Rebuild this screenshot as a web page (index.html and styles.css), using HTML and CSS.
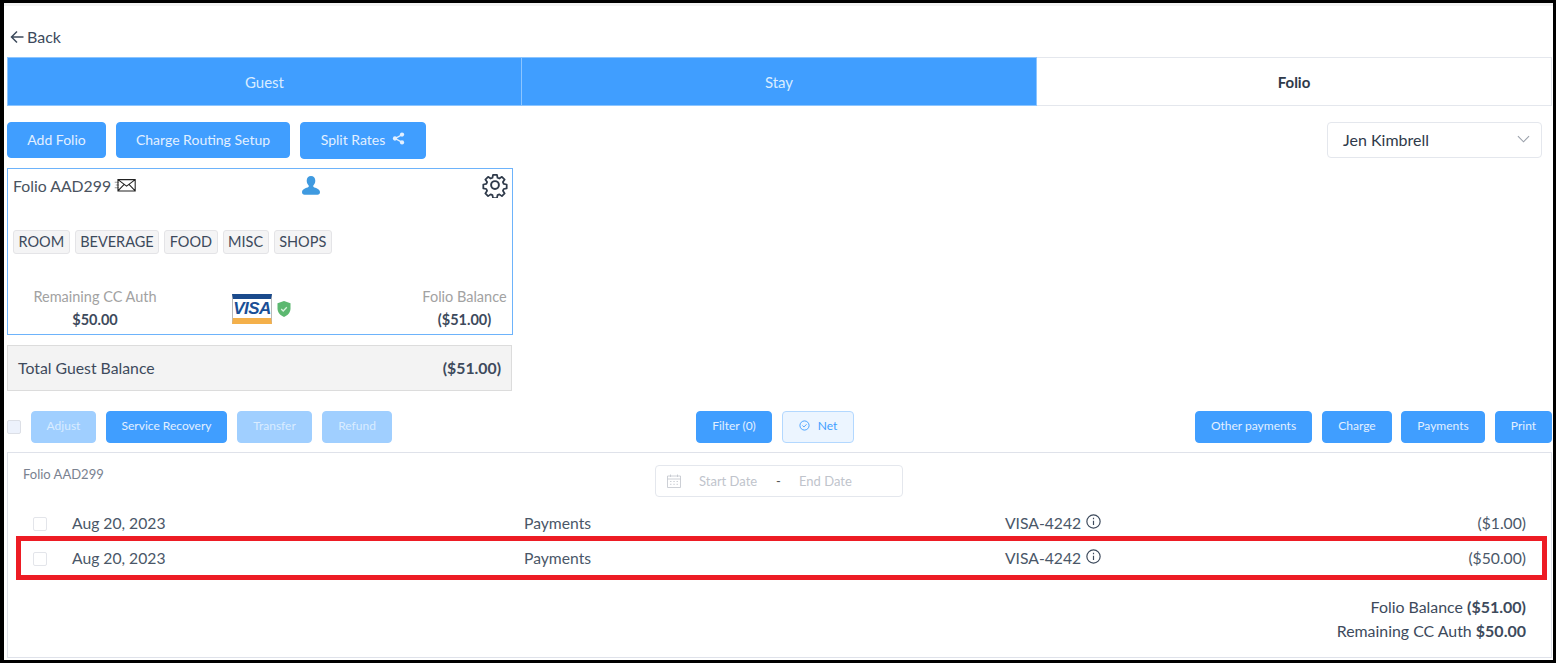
FILE: index.html
```html
<!DOCTYPE html>
<html lang="en">
<head>
<meta charset="utf-8">
<title>Folio</title>
<link rel="stylesheet" href="styles.css">
</head>
<body>
<div class="frame">
  <div class="back">
    <svg class="back-arrow" viewBox="0 0 14 14"><path d="M13.500 7H1.500M7 1.500 1.500 7 7 12.500"/></svg>
    <span>Back</span>
  </div>
  <div class="tabs">
    <div class="tab tab-done">Guest</div>
    <div class="tab tab-done">Stay</div>
    <div class="tab tab-active">Folio</div>
  </div>
  <div class="toolbar">
    <button class="btn btn-lg">Add Folio</button>
    <button class="btn btn-lg btn-route">Charge Routing Setup</button>
    <button class="btn btn-lg btn-split">Split Rates
      <svg class="share" viewBox="0 0 14 14"><path class="share-line" d="M10.500 3 3.500 7l7 4"/><circle cx="10.800" cy="2.800" r="2.300"/><circle cx="3.200" cy="7" r="2.300"/><circle cx="10.800" cy="11.200" r="2.300"/></svg>
    </button>
    <div class="select">
      <span>Jen Kimbrell</span>
      <svg class="chev" viewBox="0 0 14 8"><path d="M1 1l6 6 6-6"/></svg>
    </div>
  </div>
  <div class="card">
    <div class="card-head">
      <div class="card-title">Folio AAD299
        <svg class="mail" viewBox="0 0 20 13"><path class="mail-speed" d="M0 4h4M1 6.500h3M0 9h4"/><path d="M3 1.500h16v10.500H3zM3 1.500l8 6 8-6M3 12l6-6.300M19 12l-6-6.300"/></svg>
      </div>
      <svg class="person" viewBox="0 0 18 19"><path d="M9 0c2.600 0 4.300 2 4.300 4.700 0 2-.9 3.700-2 4.700v1.300c0 .8 6.700 1.500 6.700 5.300 0 1.700-1 2.800-2.500 2.800H2.500C1 18.800 0 17.700 0 16c0-3.800 6.700-4.500 6.700-5.300V9.400c-1.100-1-2-2.700-2-4.700C4.700 2 6.400 0 9 0z"/></svg>
      <svg class="gear" viewBox="0 0 24 24"><path d="M10 1.500h4l.6 3.100 1.900.8 2.600-1.800 2.800 2.800-1.800 2.600.8 1.900 3.100.6v0 4l-3.100.6-.8 1.900 1.800 2.600-2.800 2.800-2.600-1.800-1.900.8-.6 3.100h-4l-.6-3.100-1.900-.8-2.600 1.800-2.800-2.800 1.800-2.600-.8-1.900-3.100-.6v-4l3.100-.6.800-1.900-1.800-2.600 2.800-2.800 2.600 1.800 1.900-.8z" transform="translate(1.200 1.200) scale(.9)"/><circle cx="12" cy="12" r="3.600"/></svg>
    </div>
    <div class="chips">
      <span class="chip">ROOM</span>
      <span class="chip">BEVERAGE</span>
      <span class="chip">FOOD</span>
      <span class="chip">MISC</span>
      <span class="chip">SHOPS</span>
    </div>
    <div class="card-foot">
      <div class="stat">
        <div class="stat-label">Remaining CC Auth</div>
        <div class="stat-value">$50.00</div>
      </div>
      <div class="pay">
        <div class="visa"><span class="visa-text">VISA</span></div>
        <svg class="shield" viewBox="0 0 14 16"><path class="shield-body" d="M7 0l6.500 2.300v5.200c0 4-2.800 6.900-6.500 8.500C3.300 14.400.500 11.500.500 7.500V2.300z"/><path class="shield-check" d="M4.200 8l2 2 3.600-3.800"/></svg>
      </div>
      <div class="stat">
        <div class="stat-label">Folio Balance</div>
        <div class="stat-value">($51.00)</div>
      </div>
    </div>
  </div>
  <div class="total">
    <span>Total Guest Balance</span>
    <span class="total-value">($51.00)</span>
  </div>
  <div class="actions">
    <div class="group">
      <span class="check check-dim"></span>
      <button class="btn btn-sm btn-off btn-adjust">Adjust</button>
      <button class="btn btn-sm btn-recovery">Service Recovery</button>
      <button class="btn btn-sm btn-off btn-transfer">Transfer</button>
      <button class="btn btn-sm btn-off btn-refund">Refund</button>
    </div>
    <div class="group">
      <button class="btn btn-sm btn-filter">Filter (0)</button>
      <button class="btn btn-sm btn-net">
        <svg class="net-icon" viewBox="0 0 12 12"><circle cx="6" cy="6" r="5"/><path d="M3.800 6l1.600 1.600 2.800-2.900"/></svg>
        Net
      </button>
    </div>
    <div class="group">
      <button class="btn btn-sm btn-other">Other payments</button>
      <button class="btn btn-sm btn-charge">Charge</button>
      <button class="btn btn-sm btn-payments">Payments</button>
      <button class="btn btn-sm btn-print">Print</button>
    </div>
  </div>
  <div class="panel">
    <div class="panel-top">
      <div class="panel-title">Folio AAD299</div>
      <div class="range">
        <svg class="cal" viewBox="0 0 14 14"><path d="M.5 2h13v11.500H.5zM.5 5h13M3.500.5v2.500M10.500.5v2.500"/><path d="M3 7.500h1.500M6.300 7.500h1.500M9.500 7.500H11M3 10.300h1.500M6.300 10.300h1.500M9.500 10.300H11"/></svg>
        <span class="range-start">Start Date</span>
        <span class="range-sep">-</span>
        <span class="range-end">End Date</span>
      </div>
    </div>
    <div class="row">
      <span class="check"></span>
      <span class="cell">Aug 20, 2023</span>
      <span class="cell">Payments</span>
      <span class="cell method">VISA-4242
        <svg class="info" viewBox="0 0 14 14"><circle cx="7" cy="7" r="6.200"/><path d="M7 6.200v4M7 3.600v1.300"/></svg>
      </span>
      <span class="cell amount">($1.00)</span>
    </div>
    <div class="row row-last">
      <span class="check"></span>
      <span class="cell">Aug 20, 2023</span>
      <span class="cell">Payments</span>
      <span class="cell method">VISA-4242
        <svg class="info" viewBox="0 0 14 14"><circle cx="7" cy="7" r="6.200"/><path d="M7 6.200v4M7 3.600v1.300"/></svg>
      </span>
      <span class="cell amount">($50.00)</span>
    </div>
    <div class="summary">
      <div>Folio Balance <b>($51.00)</b></div>
      <div>Remaining CC Auth <b>$50.00</b></div>
    </div>
  </div>
  <div class="highlight"></div>
</div>
</body>
</html>
```
FILE: styles.css
```css
* { box-sizing: border-box; }
html, body { margin: 0; padding: 0; background: #000; }
body { width: 1556px; height: 663px; overflow: hidden; font-family: Lato, "Open Sans", sans-serif; color: #3d4a5c; }
.frame { position: relative; width: 1549px; height: 657px; margin: 3px 0 0 4px; background: #fff; padding: 0 0 0 3px; border-top: 3px solid #f3f3f3; }

.back { display: flex; align-items: flex-start; gap: 3px; height: 51px; padding: 21px 0 0 3px; font-size: 16px; line-height: 20px; }
.back-arrow { width: 14px; height: 14px; margin-top: 3px; fill: none; stroke: #3d4a5c; stroke-width: 1.500; }

.tabs { display: grid; grid-template-columns: repeat(3, 515px); width: 1545px; height: 49px; }
.tab { display: flex; align-items: center; justify-content: center; font-size: 15px; padding-top: 1px; border: 1px solid #e4e7ed; border-left: 0; }
.tab:first-child { border-left: 1px solid #8cc5ff; }
.tab-done { background: #409eff; color: #d9ecff; border-color: #8cc5ff; }
.tab-active { color: #2f3a4a; font-weight: 700; font-size: 15px; }

.btn { display: inline-flex; align-items: center; justify-content: center; border: 1px solid #409eff; border-radius: 4px; background: #409eff; color: #e3f0ff; font-family: inherit; padding: 0 0 2px; }
.btn-lg { height: 36px; font-size: 14px; width: 99px; }

.toolbar { display: flex; align-items: center; gap: 10px; width: 1535px; height: 36px; margin-top: 16px; }
.btn-route { width: 174px; }
.btn-split { width: 126px; height: 37px; gap: 7px; }
.share { width: 13px; height: 13px; fill: #e3f0ff; margin-top: -1px; }
.share-line { fill: none; stroke: #e3f0ff; stroke-width: 1.500; }
.select { display: flex; align-items: center; justify-content: space-between; margin-left: auto; width: 215px; height: 36px; padding: 0 11px 2px 15px; border: 1px solid #e4e7ed; border-radius: 4px; font-size: 16px; color: #2f3a4a; }
.chev { width: 13px; height: 8px; fill: none; stroke: #9aa0aa; stroke-width: 1.200; }

.card { width: 506px; height: 167px; margin-top: 10px; padding: 0 5px; border: 1px solid #6db3fb; }
.card-head { display: grid; grid-template-columns: 289px 20px 1fr; align-items: center; height: 32px; }
.card-title { display: flex; align-items: center; gap: 3px; font-size: 15.800px; white-space: nowrap; color: #4a5360; }
.mail { width: 23px; height: 14px; fill: none; stroke: #222; stroke-width: 1; }
.mail-speed { stroke: #999; }
.person { width: 18px; height: 19px; fill: #3f9ae0; }
.gear { width: 26px; height: 26px; fill: none; stroke: #2f3a4a; stroke-width: 1.800; stroke-linejoin: round; justify-self: end; margin-right: -1px; }

.chips { display: flex; gap: 5px; margin-top: 29px; }
.chip { display: flex; align-items: center; height: 24px; padding: 0 4.500px 1px; background: #f4f4f5; border: 1px solid #e4e4e7; border-radius: 3px; font-size: 14.500px; white-space: nowrap; }

.card-foot { display: grid; grid-template-columns: 164px 1fr 85px; margin-top: 34px; }
.stat { text-align: center; font-size: 14.500px; white-space: nowrap; }
.stat-label { color: #a2a2a2; height: 22px; line-height: 18px; }
.stat-value { font-weight: 700; font-size: 14.500px; line-height: 20px; }
.pay { display: flex; align-items: center; gap: 5px; padding-left: 55px; }
.visa { display: flex; align-items: center; justify-content: center; width: 40px; height: 30px; background: #fff; border: 1px solid #b9b9b9; border-top: 5px solid #1a4a8c; border-bottom: 6px solid #f4b04a; }
.visa-text { font: italic 700 17px/1 "Liberation Sans", sans-serif; color: #1a4f96; letter-spacing: -.5px; }
.shield { width: 14px; height: 16px; margin-top: -1px; }
.shield-body { fill: #5cb870; }
.shield-check { fill: none; stroke: #d8f0dd; stroke-width: 1.300; }

.total { display: flex; align-items: center; justify-content: space-between; width: 505px; height: 46px; margin-top: 10px; padding: 0 10px 2px 10px; background: #f3f3f3; border: 1px solid #dcdcdc; font-size: 15.800px; }
.total-value { font-weight: 700; font-size: 15.800px; }

.actions { display: grid; grid-template-columns: 689px 1fr auto; align-items: center; width: 1545px; height: 32px; margin-top: 20px; }
.group { display: flex; align-items: center; gap: 10px; }
.btn-sm { height: 32px; font-size: 12px; padding-bottom: 4px; }
.btn-off { background: #a0cfff; border-color: #a0cfff; color: #d9ecff; }
.btn-adjust { width: 65px; }
.btn-recovery { width: 121px; }
.btn-transfer { width: 75px; }
.btn-refund { width: 70px; }
.btn-filter { width: 76px; }
.btn-net { width: 72px; gap: 8px; background: #ecf5ff; border-color: #b3d8ff; color: #409eff; }
.net-icon { width: 11px; height: 11px; fill: none; stroke: #409eff; stroke-width: 1; }
.btn-other { width: 117px; }
.btn-charge { width: 70px; }
.btn-payments { width: 84px; margin-left: -1px; }
.btn-print { width: 57px; }

.check { display: block; width: 14px; height: 14px; border: 1px solid #e3e5ea; border-radius: 2px; background: #fff; }
.check-dim { background: #edf2fc; border-color: #dcdfe6; }

.panel { width: 1545px; height: 206px; margin-top: 9px; border: 1px solid #dfe2ea; }
.panel-top { display: flex; height: 53px; padding: 12px 0 0 15px; }
.panel-title { width: 632px; font-size: 13px; color: #7a8290; line-height: 18px; }
.range { display: flex; align-items: center; width: 248px; height: 32px; padding-left: 11px; border: 1px solid #e4e7ed; border-radius: 4px; font-size: 13px; color: #c0c4cc; }
.cal { width: 14px; height: 14px; fill: none; stroke: #c0c4cc; stroke-width: .8; flex: none; }
.range-start { margin-left: 18px; width: 77px; }
.range-sep { color: #555; width: 23px; }
.row { display: grid; grid-template-columns: 39px 452px 481px 1fr auto; align-items: center; height: 35px; margin: 0 25px; font-size: 15.700px; color: #4a5768; }
.cell { margin-top: -2px; }
.row-last { margin-left: 12px; padding-left: 13px; margin-right: 15px; padding-right: 10px; height: 36px; border-bottom: 1px solid #c9ccd2; }
.method { display: flex; align-items: center; gap: 5px; }
.info { width: 15px; height: 15px; margin-top: -3px; fill: none; stroke: #3d4a5c; stroke-width: 1.100; }
.amount { text-align: right; }
.summary { margin-top: 18px; padding-right: 25px; text-align: right; font-size: 15.900px; line-height: 24px; }
.summary b { font-size: 16px; }

.highlight { position: absolute; left: 12px; top: 530px; width: 1531px; height: 44px; border: 5px solid #ed1c24; pointer-events: none; }
```
